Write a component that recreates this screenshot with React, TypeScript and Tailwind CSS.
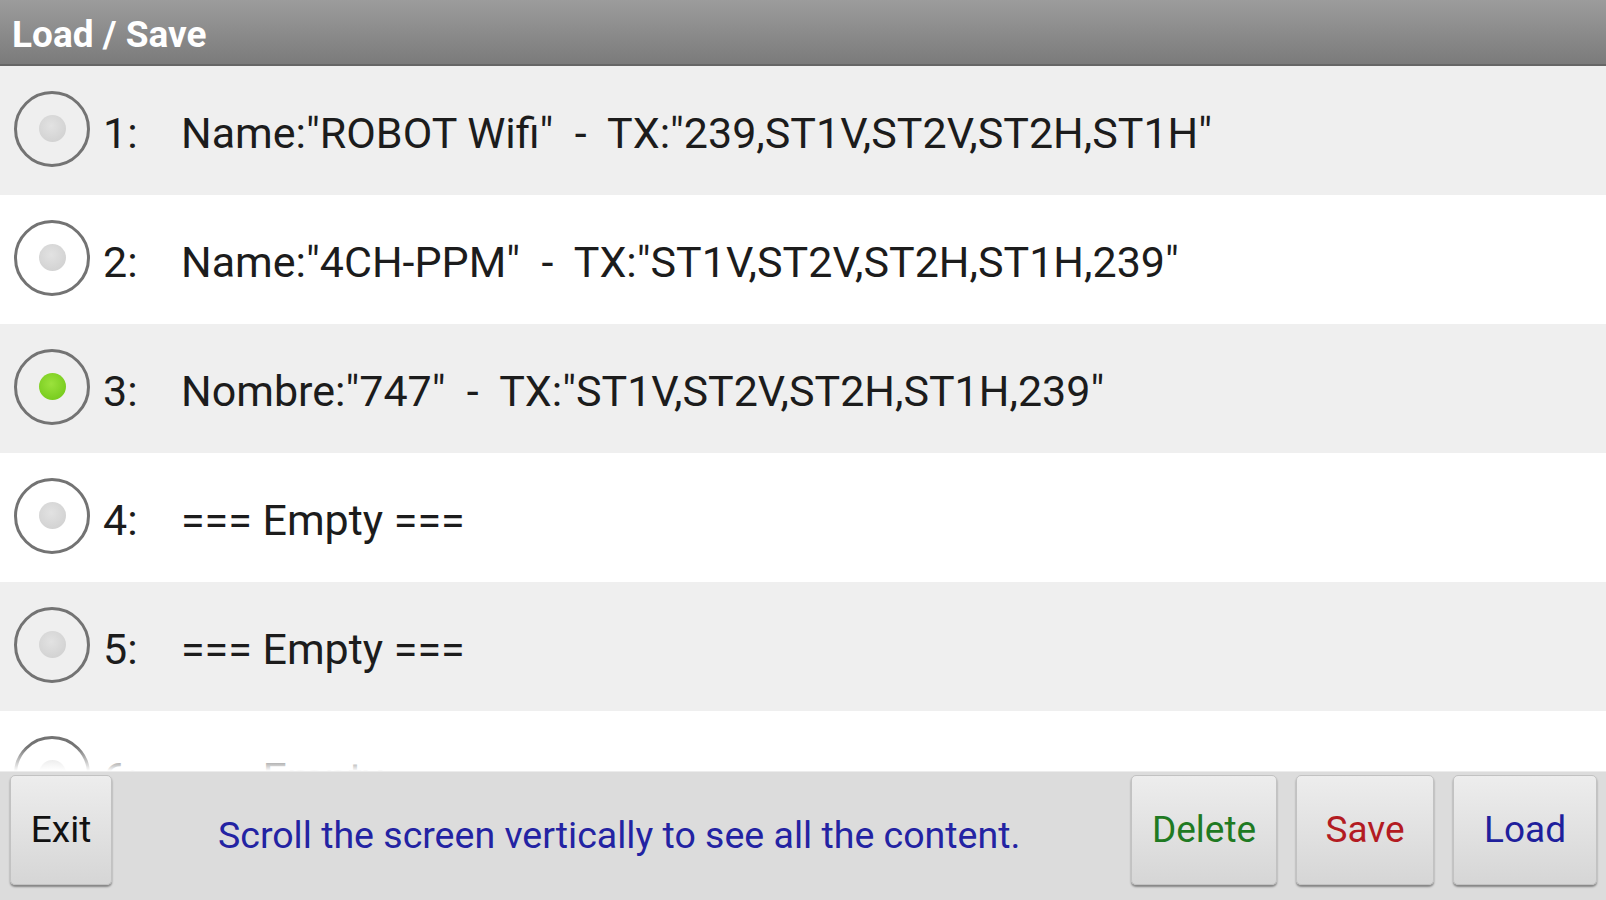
import React from 'react';

/* ── Data ── */
const slots = [
  { n: 1, label: 'Name:"ROBOT Wifi"  -  TX:"239,ST1V,ST2V,ST2H,ST1H"', on: false },
  { n: 2, label: 'Name:"4CH-PPM"  -  TX:"ST1V,ST2V,ST2H,ST1H,239"', on: false },
  { n: 3, label: 'Nombre:"747"  -  TX:"ST1V,ST2V,ST2H,ST1H,239"', on: true },
  { n: 4, label: '=== Empty ===', on: false },
  { n: 5, label: '=== Empty ===', on: false },
  { n: 6, label: '=== Empty ===', on: false },
];

const font = { fontFamily: 'Roboto, "Liberation Sans", sans-serif' };

function Radio({ on }: { on: boolean }) {
  return (
    <div className="w-[76px] h-[76px] rounded-full border-[3px] border-[#737373] flex items-center justify-center shrink-0">
      {on ? (
        <div className="w-[27px] h-[27px] rounded-full bg-[radial-gradient(circle_at_45%_40%,#9be23c,#6cc414)]" />
      ) : (
        <div className="w-[27px] h-[27px] rounded-full bg-[radial-gradient(circle_at_45%_40%,#e2e2e2,#cdcdcd)]" />
      )}
    </div>
  );
}

function Btn({ children, color, w }: { children: React.ReactNode; color: string; w: string }) {
  return (
    <button
      className={`${w} h-[110px] rounded-[5px] border border-[#c2c2c2] bg-gradient-to-b from-[#ededed] to-[#d6d6d6] shadow-[0_2px_2px_rgba(0,0,0,0.4)] text-[37px] leading-none pb-[2px] ${color} shrink-0`}
      style={font}
    >
      {children}
    </button>
  );
}

export default function App() {
  return (
    <div className="w-[1606px] h-[900px] flex flex-col overflow-hidden bg-white" style={font}>
      {/* ── Title bar ── */}
      <div className="h-[66px] shrink-0 bg-gradient-to-b from-[#9c9c9c] to-[#7b7b7b] border-b-2 border-[#666] flex items-center px-[12px] pt-[4px]">
        <span className="text-white font-bold text-[37px] leading-none">Load / Save</span>
      </div>

      {/* ── Slot list ── */}
      <div className="relative flex-1 overflow-hidden">
        {slots.map((s, i) => (
          <div
            key={s.n}
            className={`h-[129px] flex items-center pl-[14px] ${i % 2 === 0 ? 'bg-[#efefef]' : 'bg-white'}`}
          >
            <div className="pb-[4px]">
              <Radio on={s.on} />
            </div>
            <span className="w-[91px] pl-[13px] pt-[6px] text-[43px] text-[#1c1c1c] shrink-0">{s.n}:</span>
            <span className="pt-[6px] text-[43px] text-[#1c1c1c] whitespace-pre">{s.label}</span>
          </div>
        ))}
        {/* scroll edge fade */}
        <div className="absolute left-0 right-0 bottom-0 h-[24px] bg-gradient-to-b from-white/0 to-white pointer-events-none" />
      </div>

      {/* ── Bottom bar ── */}
      <div className="h-[129px] shrink-0 bg-[#dcdcdc] border-t border-[#ececec] flex items-start pl-[10px] pr-[9px] pt-[3px]">
        <Btn color="text-[#111]" w="w-[102px]">Exit</Btn>
        <span className="flex-1 pl-[106px] pt-[42px] text-[37.5px] leading-none text-[#2323a3]">
          Scroll the screen vertically to see all the content.
        </span>
        <div className="flex gap-[19px]">
          <Btn color="text-[#1f7a22]" w="w-[146px]">Delete</Btn>
          <Btn color="text-[#b31b22]" w="w-[138px]">Save</Btn>
          <Btn color="text-[#1f1f9c]" w="w-[144px]">Load</Btn>
        </div>
      </div>
    </div>
  );
}
